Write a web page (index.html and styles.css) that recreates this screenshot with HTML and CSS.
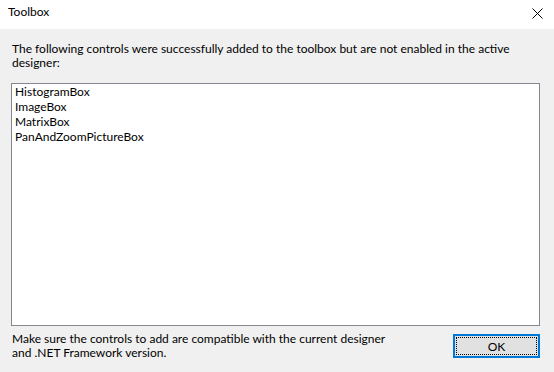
FILE: index.html
```html
<!DOCTYPE html>
<html lang="en">
<head>
<meta charset="UTF-8" />
<title>Toolbox</title>
<link rel="stylesheet" href="styles.css">
</head>
<body>

<div class="dialog">
    <div class="titlebar">
        <span class="title">Toolbox</span>
        <svg class="close" width="11" height="11" viewBox="0 0 11 11">
            <path d="M0.5 0.5 L10.5 10.5 M10.5 0.5 L0.5 10.5" stroke="#000" stroke-width="1" fill="none"/>
        </svg>
    </div>

    <div class="content">
        <p class="message">The following controls were successfully added to the toolbox but are not enabled in the active designer:</p>

        <ul class="listbox">
            <li>HistogramBox</li>
            <li>ImageBox</li>
            <li>MatrixBox</li>
            <li>PanAndZoomPictureBox</li>
        </ul>

        <div class="footer">
            <p class="note">Make sure the controls to add are compatible with the current designer<br>and .NET Framework version.</p>
            <button class="ok-button"><span>OK</span></button>
        </div>
    </div>
</div>

</body>
</html>
```
FILE: styles.css
```css
body {
    margin: 0;
    font-family: 'Lato', 'Noto Sans', sans-serif;
    font-size: 12px;
    color: #000;
    background: #f0f0f0;
}

.dialog {
    width: 554px;
    height: 372px;
    display: flex;
    flex-direction: column;
}

.titlebar {
    height: 29px;
    background: #fff;
    display: flex;
    justify-content: space-between;
    align-items: flex-start;
    padding: 0 11px 0 8px;
    box-sizing: border-box;
}

.title {
    margin-top: 5px;
    line-height: 14px;
}

.close {
    display: block;
    margin-top: 8px;
}

.content {
    flex: 1;
    padding: 0 14px 0 11px;
}

.message {
    margin: 13px 0 0 0;
    padding-left: 1px;
    line-height: 14px;
}

.listbox {
    list-style: none;
    margin: 13px 0 0 0;
    padding: 0 0 0 3px;
    height: 243px;
    box-sizing: border-box;
    background: #fff;
    border: 1px solid #828790;
}

.listbox li {
    line-height: 15px;
}

.footer {
    display: flex;
    justify-content: space-between;
    align-items: flex-start;
}

.note {
    margin: 6px 0 0 0;
    padding-left: 1px;
    line-height: 14px;
}

.ok-button {
    margin-top: 8px;
    width: 87px;
    height: 24px;
    padding: 1px;
    border: 2px solid #0078d7;
    background: #e1e1e1;
    font: inherit;
    color: #000;
    box-sizing: border-box;
    display: flex;
}

.ok-button span {
    flex: 1;
    display: flex;
    align-items: center;
    justify-content: center;
    border: 1px dotted #000;
}
```
